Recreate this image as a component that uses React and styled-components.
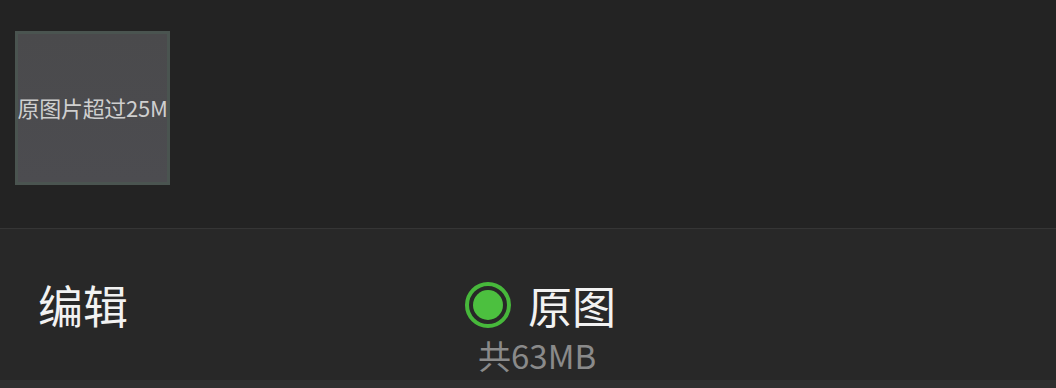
import React from "react";
import styled, { createGlobalStyle } from "styled-components";

const Global = createGlobalStyle`
  html, body { margin: 0; padding: 0; background: #232323; }
  body { font-family: "Noto Sans CJK SC", "Noto Sans", sans-serif; }
`;

const Page = styled.div`
  width: 1056px;
  height: 388px;
  display: flex;
  flex-direction: column;
  background: #232323;
  overflow: hidden;
`;

const Gallery = styled.div`
  height: 229px;
  box-sizing: border-box;
  padding: 31px 0 0 15px;
  border-bottom: 1px solid #353535;
  background: #232323;
`;

const Thumb = styled.div`
  width: 155px;
  height: 154px;
  box-sizing: border-box;
  border: 3px solid #4a5450;
  background: linear-gradient(180deg, #4a4a4c 0%, #4c4c50 100%);
  display: flex;
  align-items: center;
  justify-content: center;
  color: #cfcfcf;
  font-size: 22px;
  letter-spacing: -0.3px;
  white-space: nowrap;
  padding-bottom: 2px;
`;

const Bar = styled.div`
  flex: 1;
  background: #282828;
  display: grid;
  grid-template-columns: 465px 1fr;
  align-items: start;
  padding-left: 40px;
  box-sizing: border-box;
`;

const EditLabel = styled.div`
  margin-top: 44px;
  color: #f2f2f2;
  font-size: 45px;
  line-height: 64px;
  margin-left: -2px;
`;

const Original = styled.div`
  display: flex;
  flex-direction: column;
  align-items: flex-start;
  margin-top: 44px;
  margin-left: -40px;
`;

const RadioRow = styled.div`
  display: flex;
  align-items: center;
  gap: 17px;
  height: 64px;
`;

const Radio = styled.div`
  width: 46px;
  height: 46px;
  box-sizing: border-box;
  border-radius: 50%;
  border: 4px solid #47b83b;
  display: flex;
  align-items: center;
  justify-content: center;
  &::after {
    content: "";
    width: 30px;
    height: 30px;
    border-radius: 50%;
    background: #4cc03f;
  }
`;

const OptionLabel = styled.span`
  color: #f2f2f2;
  font-size: 44px;
  line-height: 64px;
`;

const SizeText = styled.div`
  margin-left: 13px;
  margin-top: -2px;
  color: #8a8a8a;
  font-size: 33px;
  line-height: 40px;
`;

const BottomStrip = styled.div`
  height: 8px;
  background: #2f2f2f;
`;

export default function App() {
  return (
    <>
      <Global />
      <Page>
        <Gallery>
          <Thumb>原图片超过25M</Thumb>
        </Gallery>
        <Bar>
          <EditLabel>编辑</EditLabel>
          <Original>
            <RadioRow>
              <Radio />
              <OptionLabel>原图</OptionLabel>
            </RadioRow>
            <SizeText>共63MB</SizeText>
          </Original>
        </Bar>
        <BottomStrip />
      </Page>
    </>
  );
}
